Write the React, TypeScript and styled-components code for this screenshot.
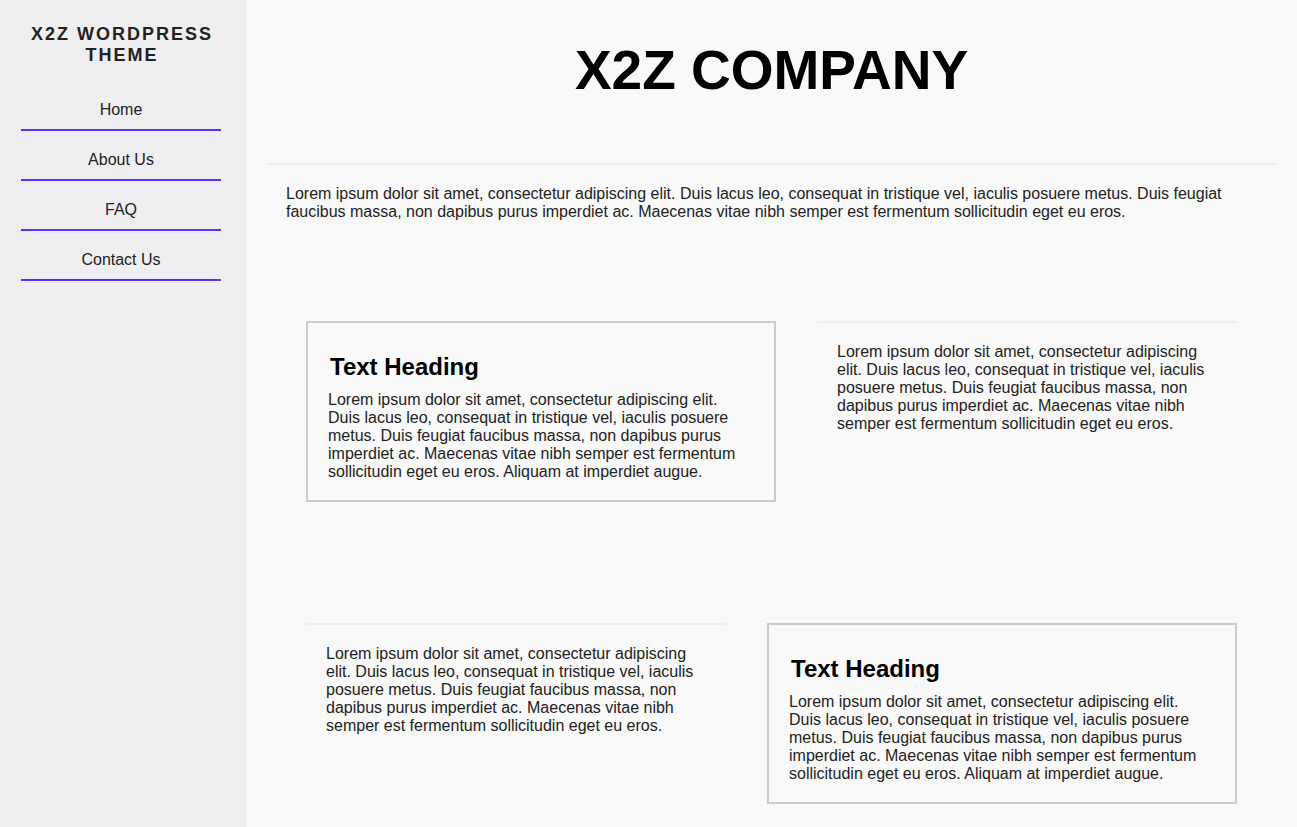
import React from "react";
import styled, { createGlobalStyle } from "styled-components";

const GlobalStyle = createGlobalStyle`
  html, body {
    margin: 0;
    padding: 0;
    background: #f9f9f9;
  }
  body {
    font-family: "Liberation Sans", Arial, sans-serif;
    color: #222222;
  }
  * { box-sizing: border-box; }
`;

const Layout = styled.div`
  display: flex;
  min-height: 100vh;
  background: #f9f9f9;
`;

const Sidebar = styled.aside`
  flex: 0 0 246px;
  width: 246px;
  background: #efeff1;
  padding: 24px 25px 0 21px;
`;

const SiteTitle = styled.div`
  font-size: 18px;
  line-height: 20.5px;
  font-weight: 700;
  letter-spacing: 2px;
  text-transform: uppercase;
  text-align: center;
  color: #222222;
  margin: 0 0 16px;
  padding: 0 6px 0 8px;
`;

const Nav = styled.nav`
  display: flex;
  flex-direction: column;
  width: 200px;
`;

const NavLink = styled.a`
  display: block;
  margin-top: 9px;
  padding: 11px 0;
  border-bottom: 2px solid #5533ff;
  text-align: center;
  font-size: 16px;
  line-height: 17px;
  color: #222222;
  text-decoration: none;
`;

const Main = styled.main`
  flex: 1;
  padding: 0 20px 22px;
`;

const Header = styled.header`
  padding: 38px 0 61px;
`;

const CompanyTitle = styled.h1`
  margin: 0;
  text-align: center;
  font-size: 55px;
  line-height: 64px;
  font-weight: 700;
  color: #000000;
`;

const Divider = styled.div`
  height: 2px;
  background: #eeeeee;
`;

const Intro = styled.p`
  margin: 20px 20px 0;
  font-size: 16px;
  line-height: 18px;
`;

const Row = styled.section<{ $reverse?: boolean; $top: number }>`
  display: grid;
  grid-template-columns: ${(p) => (p.$reverse ? "1fr 470px" : "470px 1fr")};
  column-gap: 41px;
  align-items: start;
  margin-top: ${(p) => p.$top}px;
  padding: 0 40px;
`;

const Card = styled.div`
  border: 2px solid #cccccc;
  padding: 30px 30px 19px 20px;
`;

const CardHeading = styled.h3`
  margin: 0 0 10px 2px;
  font-size: 24px;
  line-height: 28px;
  font-weight: 700;
  color: #000000;
`;

const Text = styled.p`
  margin: 0;
  font-size: 16px;
  line-height: 18px;
`;

const Block = styled.div`
  border-top: 2px solid #eeeeee;
  padding: 20px 20px;
`;

const short =
  "Lorem ipsum dolor sit amet, consectetur adipiscing elit. Duis lacus leo, consequat in tristique vel, iaculis posuere metus. Duis feugiat faucibus massa, non dapibus purus imperdiet ac. Maecenas vitae nibh semper est fermentum sollicitudin eget eu eros.";
const long = short + " Aliquam at imperdiet augue.";

const navItems = ["Home", "About Us", "FAQ", "Contact Us"];

function FeatureCard() {
  return (
    <Card>
      <CardHeading>Text Heading</CardHeading>
      <Text>{long}</Text>
    </Card>
  );
}

function TextBlock() {
  return (
    <Block>
      <Text>{short}</Text>
    </Block>
  );
}

export default function App() {
  return (
    <>
      <GlobalStyle />
      <Layout>
        <Sidebar>
          <SiteTitle>X2Z WordPress Theme</SiteTitle>
          <Nav>
            {navItems.map((item) => (
              <NavLink key={item} href="#">
                {item}
              </NavLink>
            ))}
          </Nav>
        </Sidebar>
        <Main>
          <Header>
            <CompanyTitle>X2Z COMPANY</CompanyTitle>
          </Header>
          <Divider />
          <Intro>{short}</Intro>
          <Row $top={100}>
            <FeatureCard />
            <TextBlock />
          </Row>
          <Row $top={121} $reverse>
            <TextBlock />
            <FeatureCard />
          </Row>
        </Main>
      </Layout>
    </>
  );
}
